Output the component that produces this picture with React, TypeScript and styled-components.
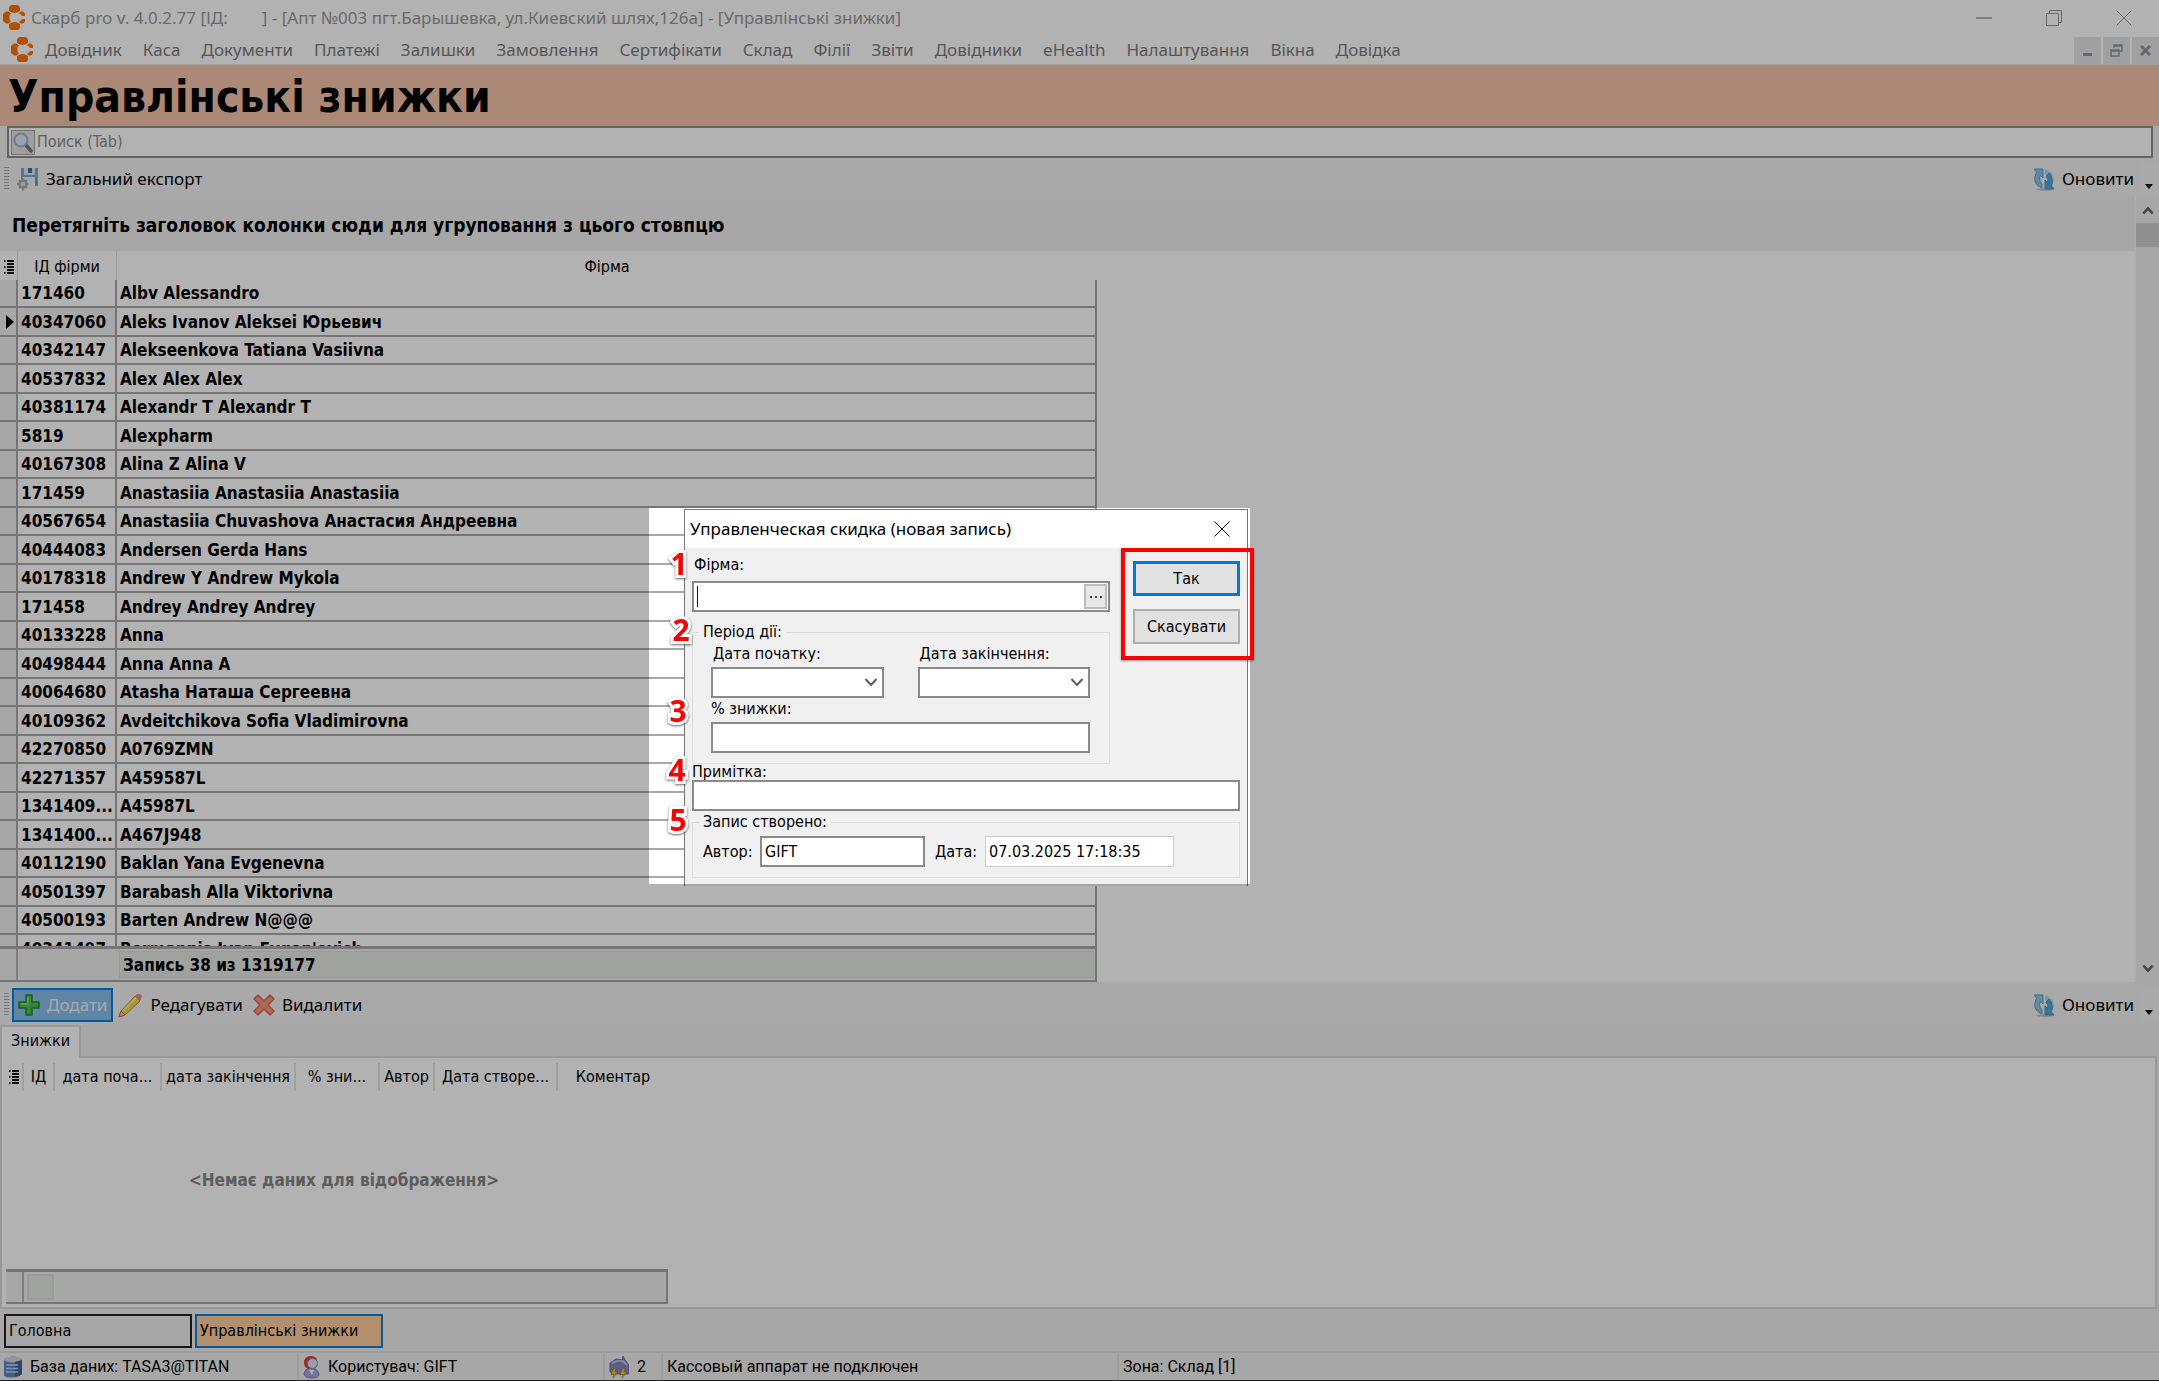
import React from "react";
import styled, { createGlobalStyle, css } from "styled-components";

const TAHOMA = `"DejaVu Sans Condensed", "DejaVu Sans", sans-serif`;
const SEGOE = `"Noto Sans", "Open Sans", sans-serif`;
const SYSTEM = `Roboto, "Liberation Sans", sans-serif`;

const GlobalStyle = createGlobalStyle`
  * { box-sizing: border-box; }
  body { margin: 0; background: #f0f0f0; }
  button, input, select { font: inherit; color: inherit; margin: 0; border-radius: 0; }
`;

const Window = styled.div`
  position: relative;
  display: flex;
  flex-direction: column;
  height: 100vh;
  overflow: hidden;
  background: #f0f0f0;
  color: #000;
  font: 16px/20px ${TAHOMA};
  border-bottom: 1px solid #222;
`;

/* ---------- window chrome ---------- */

const TitleBar = styled.header`
  display: flex;
  align-items: center;
  height: 36px;
  padding-left: 3px;
  background: #fff;
  color: #999;
  font: 17px/24px ${SEGOE};
`;

const TitleText = styled.div`
  flex: 1;
  padding-left: 6px;
  white-space: pre;
`;

const Redacted = styled.span`
  display: inline-block;
  width: 34px;
`;

const CaptionButton = styled.button`
  display: grid;
  place-items: center;
  width: 70px;
  height: 34px;
  padding: 0;
  border: 0;
  background: none;
  color: #999;
`;

const MenuBar = styled.nav`
  display: flex;
  align-items: center;
  height: 29px;
  padding-left: 11px;
  background: #fff;
  color: #7c7c7c;
  font: 17px/24px ${SEGOE};
  border-bottom: 1px solid #e4e4e4;
`;

const MenuList = styled.div`
  display: flex;
  flex: 1;
  gap: 21px;
  padding-left: 12px;
`;

const MenuItem = styled.button`
  padding: 0;
  border: 0;
  background: none;
  white-space: nowrap;
`;

const MdiButton = styled.button`
  display: grid;
  place-items: center;
  width: 27px;
  height: 27px;
  margin-left: 2px;
  padding: 0;
  border: 0;
  background: #e6e6e6;
`;

const Banner = styled.h1`
  height: 61px;
  margin: 0;
  padding-left: 8px;
  background: #f7c5a9;
  font: bold 44px/64px ${TAHOMA};
`;

const SearchBox = styled.label`
  display: flex;
  align-items: center;
  height: 32px;
  margin: 0 6px 0 7px;
  padding: 0 2px;
  border: 2px solid #8e8e8e;
  background: #fff;
`;

const SearchIconBox = styled.span`
  display: grid;
  place-items: center;
  width: 24px;
  height: 25px;
  border: 1px solid #a8a8a8;
  background: #e3e3e3;
`;

const SearchInput = styled.input`
  flex: 1;
  padding: 0 2px;
  border: 0;
  outline: 0;
  background: none;
  font: 16px/20px ${TAHOMA};
  &::placeholder { color: #8a8a8a; opacity: 1; }
`;

/* ---------- toolbars ---------- */

const Toolbar = styled.div<{ $h: number }>`
  display: flex;
  flex: none;
  align-items: center;
  height: ${(p) => p.$h}px;
  padding: 3px 0 0 4px;
  background: #f2f2f2;
  font: 17px/24px ${SEGOE};
`;

const Grip = styled.span`
  width: 5px;
  height: 24px;
  margin-right: 3px;
  background: repeating-linear-gradient(#a8a8a8 0 1px, transparent 1px 3px);
`;

const ToolButton = styled.button<{ $active?: boolean }>`
  display: flex;
  align-items: center;
  gap: 7px;
  height: 34px;
  padding: 0 4px;
  border: 1px solid transparent;
  background: none;
  white-space: nowrap;
  ${(p) =>
    p.$active &&
    css`
      border: 2px solid #0a80dc;
      background: #8abfec;
      color: #eef4fa;
    `}
`;

const Spacer = styled.span`
  flex: 1;
`;

const DropArrow = styled.button`
  display: flex;
  align-items: flex-end;
  justify-content: center;
  width: 20px;
  height: 32px;
  padding: 0 0 6px;
  border: 0;
  background: #f4f4f4;
`;

/* ---------- main grid ---------- */

const Upper = styled.section`
  display: flex;
  flex: 1;
  min-height: 0;
`;

const GridArea = styled.div`
  display: flex;
  flex: 1;
  flex-direction: column;
  min-width: 0;
  background: #fff;
`;

const GroupPanel = styled.div`
  flex: none;
  height: 54px;
  padding-left: 12px;
  background: #f0f0f0;
  font: bold 19px/56px ${TAHOMA};
`;

const TableClip = styled.div`
  flex: 1;
  min-height: 0;
  overflow: hidden;
`;

const FirmTable = styled.table`
  width: 1097px;
  table-layout: fixed;
  border-spacing: 0;
  th {
    height: 29px;
    padding: 2px 0 0;
    border-right: 1px solid #e2e2e2;
    font-weight: normal;
    line-height: 20px;
  }
  th:last-child { border-right: 0; }
  td {
    height: 28px;
    padding: 0 3px;
    border-right: 2px solid #a8a8a8;
    border-bottom: 2px solid #a8a8a8;
    font-weight: bold;
    font-size: 17px;
    line-height: 20px;
    white-space: nowrap;
    overflow: hidden;
  }
  tbody tr:nth-child(even) td { height: 29px; }
  th svg { display: block; margin: 0 auto; }
`;

const MarkCell = styled.td`
  background: #f0f0f0;
  svg { display: block; margin-left: 3px; }
`;

const IdCell = styled.td<{ $focused?: boolean }>`
  background: ${(p) => (p.$focused ? "#f0f0f0" : "#fff")};
`;

const Summary = styled.div`
  display: flex;
  flex: none;
  width: 1097px;
  height: 36px;
  border: solid #a8a8a8;
  border-width: 3px 2px 2px 0;
  background: #f0f0f0;
`;

const SummaryMark = styled.span`
  width: 18px;
  border-right: 2px solid #b4b4b4;
`;

const SummaryText = styled.output`
  flex: 1;
  margin: 2px 1px 2px 101px;
  padding-left: 3px;
  border: 1px solid #dadeda;
  background: #e5e9e6;
  font: bold 17px/26px ${TAHOMA};
`;

const ScrollTrack = styled.div`
  display: flex;
  flex-direction: column;
  align-items: center;
  width: 24px;
  padding: 9px 0;
  border-left: 1px solid #fafafa;
  background: #f0f0f0;
`;

const ScrollThumb = styled.div`
  width: 23px;
  height: 24px;
  margin: 8px 0 auto;
  background: #cdcdcd;
`;

/* ---------- lower panel ---------- */

const TabRow = styled.div`
  display: flex;
  flex: none;
  height: 31px;
`;

const Tab = styled.button`
  position: relative;
  width: 81px;
  height: 33px;
  padding: 0 0 4px;
  border: solid #dcdcdc;
  border-width: 2px 2px 0;
  background: #fff;
`;

const Detail = styled.section`
  display: flex;
  flex: none;
  flex-direction: column;
  height: 253px;
  margin: 0 2px 0 0;
  padding: 5px 4px 3px;
  border: 2px solid #dcdcdc;
  background: #fff;
`;

const DetailTable = styled.table`
  width: 662px;
  table-layout: fixed;
  border-spacing: 0;
  th {
    height: 28px;
    padding: 0;
    border-right: 2px solid #e6e6e6;
    font-weight: normal;
    line-height: 20px;
    white-space: nowrap;
  }
  th:last-child { border-right: 0; }
  th svg { display: block; margin: 0 auto; }
  td {
    height: 178px;
    padding: 0 0 0 14px;
    color: #868686;
    font: bold 17px/20px ${TAHOMA};
    text-align: center;
  }
`;

const DetailSummary = styled.div`
  display: flex;
  width: 662px;
  height: 37px;
  border: solid #a8a8a8;
  border-width: 3px 2px 2px 0;
  background: #f0f0f0;
`;

const DetailMark = styled.span`
  width: 18px;
  border-right: 2px solid #b4b4b4;
`;

const DetailBox = styled.span`
  width: 27px;
  margin: 2px 3px;
  border: 2px solid #dadeda;
  background: #e5e9e6;
`;

const WindowTabs = styled.div`
  display: flex;
  flex: none;
  gap: 3px;
  height: 42px;
  padding: 5px 0 3px 4px;
`;

const WindowTab = styled.button<{ $active?: boolean }>`
  width: 188px;
  padding: 0 3px;
  border: 2px solid ${(p) => (p.$active ? "#0a80dc" : "#222")};
  background: ${(p) => (p.$active ? "#ffcf9e" : "#f0f0f0")};
  text-align: left;
`;

const StatusBar = styled.footer`
  display: flex;
  flex: none;
  height: 29px;
  border-top: 2px solid #e0e0e0;
  font: 16px/28px ${SYSTEM};
`;

const StatusCell = styled.div<{ $w?: number }>`
  display: flex;
  align-items: center;
  gap: 8px;
  width: ${(p) => (p.$w ? `${p.$w}px` : "auto")};
  padding-left: 4px;
  border-right: ${(p) => (p.$w ? "2px solid #dedede" : "0")};
  white-space: nowrap;
`;

/* ---------- dialog ---------- */

const Dialog = styled.form`
  position: absolute;
  left: 684px;
  top: 509px;
  display: flex;
  flex-direction: column;
  width: 564px;
  padding-bottom: 8px;
  border: 1px solid #777;
  border-bottom: 0;
  background: #f0f0f0;
`;

const DialogTitle = styled.div`
  display: flex;
  align-items: center;
  justify-content: space-between;
  height: 38px;
  padding: 0 17px 0 5px;
  background: #fff;
  font: 17px/24px ${SEGOE};
`;

const CloseButton = styled.button`
  display: grid;
  padding: 0;
  border: 0;
  background: none;
`;

const DialogTop = styled.div`
  display: flex;
  justify-content: space-between;
  padding: 9px 7px 0;
`;

const FormColumn = styled.div`
  width: 418px;
`;

const ButtonColumn = styled.div`
  display: flex;
  flex-direction: column;
  gap: 13px;
  width: 107px;
  padding-top: 4px;
`;

const PushButton = styled.button<{ $primary?: boolean }>`
  height: 35px;
  padding: 0;
  border: ${(p) => (p.$primary ? "3px solid #0078d7" : "2px solid #adadad")};
  background: #e1e1e1;
`;

const Label = styled.label<{ $w?: number; $pad?: number }>`
  display: block;
  width: ${(p) => (p.$w ? `${p.$w}px` : "auto")};
  padding-left: ${(p) => p.$pad ?? 0}px;
  line-height: 16px;
  white-space: nowrap;
`;

const Field = styled.input<{ $w?: number; $light?: boolean }>`
  display: block;
  width: ${(p) => (p.$w ? `${p.$w}px` : "100%")};
  height: 31px;
  padding: 0 3px;
  border: ${(p) => (p.$light ? "1px solid #ccc" : "2px solid #8a8a8a")};
  outline: 0;
  background: #fff;
`;

const LookupField = styled.div`
  display: flex;
  align-items: center;
  height: 31px;
  margin: 8px 0 12px;
  padding: 0 1px;
  border: 2px solid #8a8a8a;
  background: #fff;
`;

const Caret = styled.span`
  width: 1px;
  height: 21px;
  margin-left: 2px;
  background: #111;
`;

const LookupInput = styled.input`
  flex: 1;
  border: 0;
  outline: 0;
  background: none;
`;

const LookupButton = styled.button`
  display: grid;
  place-items: center;
  width: 23px;
  height: 25px;
  padding: 0;
  border: 2px solid #bcbcbc;
  background: #e8e8e8;
`;

const Group = styled.fieldset<{ $row?: boolean }>`
  min-width: 0;
  margin: 0;
  padding: ${(p) => (p.$row ? "6px 10px 10px" : "6px 19px 10px 18px")};
  border: 1px solid #dcdcdc;
`;

const Legend = styled.legend<{ $shift?: number }>`
  margin-left: ${(p) => p.$shift ?? 0}px;
  padding: 0 4px;
  line-height: 16px;
`;

const DateRow = styled.div`
  display: grid;
  grid-template-columns: 1fr 1fr;
  gap: 34px;
  margin-bottom: 3px;
`;

const Stack = styled.div`
  display: flex;
  flex-direction: column;
  gap: 5px;
`;

const SelectWrap = styled.div`
  position: relative;
  svg {
    position: absolute;
    right: 6px;
    top: 11px;
    pointer-events: none;
  }
`;

const Select = styled.select`
  display: block;
  width: 100%;
  height: 31px;
  border: 2px solid #8a8a8a;
  background: #fff;
  appearance: none;
`;

const DialogBottom = styled.div`
  padding: 0 7px;
`;

const NoteField = styled(Field)`
  margin-bottom: 3px;
`;

const InlineRow = styled.div`
  display: flex;
  align-items: center;
`;

const Gap = styled.span`
  width: 10px;
`;

/* ---------- tutorial layer ---------- */

const Spotlight = styled.div`
  position: absolute;
  left: 649px;
  top: 508px;
  width: 601px;
  height: 376px;
  box-shadow: 0 0 0 3000px rgba(0, 0, 0, 0.3);
  pointer-events: none;
`;

const Highlight = styled.div`
  position: absolute;
  left: 1121px;
  top: 548px;
  width: 133px;
  height: 112px;
  border: 4px solid #fe0000;
  box-shadow: 0 1px 2px rgba(0, 0, 0, 0.4);
  pointer-events: none;
`;

const Step = styled.span`
  position: absolute;
  width: 24px;
  color: #fe0000;
  font: bold 30px/32px "Open Sans", sans-serif;
  text-align: center;
  -webkit-text-stroke: 6px #fff;
  paint-order: stroke fill;
  filter: drop-shadow(0 1px 1px rgba(0, 0, 0, 0.6));
  pointer-events: none;
`;

/* ---------- icons ---------- */

const Logo = () => (
  <svg width="22" height="26" viewBox="0 0 22 26" fill="#ff7300">
    <path d="M6 6V2.500Q6.500 0 9 0h5q2.500 0 3 2.500V6q-3 2-5.500 2T6 6z" />
    <path d="M6 19v3.500Q6.500 25 9 25h5q2.500 0 3-2.500V19q-3-2-5.500-2T6 19z" />
    <path d="M5.500 6.500 8 8.500 6.500 10v5l1.500 1.500-2.500 2H3L0 16V9l3-2.500z" />
    <path d="M17.500 6.500H20l2 2v2.500h-2.500L16 8z" />
    <path d="M17.500 18.500H20l2-2V14h-2.500L16 17z" />
  </svg>
);

const Cross = ({ size, width }: { size: number; width: number }) => (
  <svg width={size} height={size} viewBox="0 0 16 16" fill="none" stroke="currentColor" strokeWidth={width}>
    <path d="M.5.5l15 15M15.500.5l-15 15" />
  </svg>
);

const Magnifier = () => (
  <svg width="20" height="21" viewBox="0 0 20 21">
    <path d="M12 12l6 7" stroke="#777" strokeWidth="3.500" strokeLinecap="round" />
    <circle cx="8" cy="8" r="6.500" fill="#dfe9fb" stroke="#a3afc8" strokeWidth="2" />
  </svg>
);

const ExportIcon = () => (
  <svg width="22" height="24" viewBox="0 0 22 24">
    <path d="M4 1h17v18H4z" fill="#86a9c2" />
    <path d="M7 1h11v7H7z" fill="#dfeaf2" />
    <path d="M11 1h4v5h-4z" fill="#4c6f96" />
    <path d="M6 10h12v9H6z" fill="#eceeef" />
    <path d="M18 10h2v8h-2z" fill="#5c9fc0" />
    <circle cx="6" cy="17" r="3.500" fill="#e4e4e4" stroke="#a5acb1" strokeWidth="2.500" />
    <path d="M6 11.500v2M6 20.500v3M0 17h2.500M9.500 17h2M2 13l1.500 1.500M8.500 19.500L10 21M10 13l-1.500 1.500M3.500 19.500L2 21" stroke="#a5acb1" strokeWidth="2" />
  </svg>
);

const RefreshIcon = () => (
  <svg width="22" height="23" viewBox="0 0 22 23">
    <ellipse cx="12" cy="21.500" rx="9" ry="1.500" fill="#c6c6c6" />
    <path d="M12 1q8 2 9 10l-1 4-4-1q1-6-4-8z" fill="#b4d8f0" />
    <path d="M1 1h9v9L7.500 7.500Q5 11 9 16v4Q-2 16 3.500 4z" fill="#8cc6ea" stroke="#5a9fce" />
    <path d="M21 21h-9v-9l2.500 2.500Q16 12 13 8l3-3q5 6 2.500 13z" fill="#58a8d8" stroke="#4a94c8" />
  </svg>
);

const PlusIcon = () => (
  <svg width="22" height="22" viewBox="0 0 22 22">
    <path d="M8 1h6v7h7v6h-7v7H8v-7H1V8h7z" fill="#4cc04c" stroke="#1f8a2a" strokeWidth="1.500" strokeLinejoin="round" />
    <path d="M10 3v7H3" fill="none" stroke="#8be08b" strokeWidth="1.500" />
  </svg>
);

const PencilIcon = () => (
  <svg width="25" height="25" viewBox="0 0 25 25">
    <path d="M17 3l5 5L7 22l-6 2 2-6z" fill="#f6d04c" stroke="#b8923a" />
    <path d="M1 24l2-6 4 4z" fill="#efcfa8" stroke="#a07c50" />
    <path d="M18 2q3-3 6 1 0 2-2 5l-5-5z" fill="#e88a90" />
    <path d="M5 18L18 5" stroke="#fdeb9c" strokeWidth="2" />
  </svg>
);

const DeleteIcon = () => (
  <svg width="22" height="22" viewBox="0 0 22 22">
    <path
      d="M5 1l6 6 6-6 4 4-6 6 6 6-4 4-6-6-6 6-4-4 6-6-6-6z"
      fill="#f79580"
      stroke="#dd6656"
      strokeWidth="1.500"
      strokeLinejoin="round"
    />
  </svg>
);

const IndicatorIcon = () => (
  <svg width="10" height="16" viewBox="0 0 10 16" stroke="#111" strokeWidth="2">
    <path d="M3 2h7M3 5h7M3 8h7M3 11h7M3 14h7M0 2h1.500M0 8h1.500M0 14h1.500" />
  </svg>
);

const DatabaseIcon = () => (
  <svg width="18" height="22" viewBox="0 0 18 22">
    <path d="M0 3q9-5 18 0v15q-9 6-18 2z" fill="#5b83c4" />
    <ellipse cx="9" cy="3.500" rx="9" ry="3" fill="#cfd6e6" />
    <path d="M11 6l7-2v14q-3 3-7 3z" fill="#4a5f94" />
    <path d="M2 9h12M2 12.500h12M2 16h12" stroke="#b5d4f7" strokeWidth="1.500" />
  </svg>
);

const UserIcon = () => (
  <svg width="17" height="24" viewBox="0 0 17 24">
    <path d="M1 19q1-6 7-6t8 6q0 4-7 4t-8-4z" fill="#a5a9da" stroke="#7478b4" />
    <path d="M1 8q0-7 7-7 4 0 6 3L6 14q-5-1-5-6z" fill="#d8412f" />
    <circle cx="9.500" cy="8.500" r="5" fill="#dfe0f4" stroke="#8286bc" />
    <path d="M6 15l3 5 2-5z" fill="#fff" />
  </svg>
);

const MailIcon = () => (
  <svg width="20" height="24" viewBox="0 0 20 24">
    <path d="M1 8l6-4 6 1 1-4 2 4 4 5v9H5l-4-2z" fill="#8589c4" stroke="#6b6fa6" />
    <path d="M3 8l5-2h6l4 4" stroke="#b9bce4" strokeWidth="2" fill="none" />
    <path d="M4 14l-2 6 3-1-1 4 5-7-3 1 1-4zM13 14l-2 6 3-1-1 4 5-7-3 1 1-4z" fill="#f3cb3e" stroke="#8a7024" strokeWidth=".7" />
  </svg>
);

const Chevron = ({ up, w, h, sw }: { up?: boolean; w: number; h: number; sw: number }) => (
  <svg width={w} height={h} viewBox="0 0 14 9" fill="none" stroke="#606060" strokeWidth={sw}>
    <path d={up ? "M1.500 8L7 2l5.500 6" : "M1.500 1L7 7l5.500-6"} />
  </svg>
);

/* ---------- data ---------- */

const MENU = [
  "Довідник", "Каса", "Документи", "Платежі", "Залишки", "Замовлення", "Сертифікати", "Склад",
  "Філії", "Звіти", "Довідники", "eHealth", "Налаштування", "Вікна", "Довідка",
];

const FIRMS: [string, string][] = [
  ["171460", "Albv Alessandro"],
  ["40347060", "Aleks Ivanov Aleksei Юрьевич"],
  ["40342147", "Alekseenkova Tatiana Vasiivna"],
  ["40537832", "Alex Alex Alex"],
  ["40381174", "Alexandr T Alexandr T"],
  ["5819", "Alexpharm"],
  ["40167308", "Alina Z Alina V"],
  ["171459", "Anastasiia Anastasiia Anastasiia"],
  ["40567654", "Anastasiia Chuvashova Анастасия Андреевна"],
  ["40444083", "Andersen Gerda Hans"],
  ["40178318", "Andrew Y Andrew Mykola"],
  ["171458", "Andrey Andrey Andrey"],
  ["40133228", "Anna"],
  ["40498444", "Anna Anna A"],
  ["40064680", "Atasha Наташа Сергеевна"],
  ["40109362", "Avdeitchikova Sofia Vladimirovna"],
  ["42270850", "A0769ZMN"],
  ["42271357", "A459587L"],
  ["1341409...", "A45987L"],
  ["1341400...", "A467J948"],
  ["40112190", "Baklan Yana Evgenevna"],
  ["40501397", "Barabash Alla Viktorivna"],
  ["40500193", "Barten Andrew N@@@"],
  ["40341497", "Bermannis Ivan Evgen'evich"],
];

const DETAIL_COLUMNS: [string, number][] = [
  ["ІД", 31],
  ["дата поча...", 107],
  ["дата закінчення", 134],
  ["% зни...", 84],
  ["Автор", 55],
  ["Дата створе...", 123],
  ["Коментар", 110],
];

const STEPS: [number, number, number][] = [
  [1, 667, 548],
  [2, 669, 614],
  [3, 666, 695],
  [4, 665, 754],
  [5, 666, 804],
];

const Refresh = () => (
  <>
    <Spacer />
    <ToolButton type="button">
      <RefreshIcon />
      Оновити
    </ToolButton>
    <DropArrow type="button" aria-label="Параметри панелі">
      <svg width="8" height="5" viewBox="0 0 8 5"><path d="M0 0h8L4 5z" /></svg>
    </DropArrow>
  </>
);

export default function App() {
  return (
    <Window>
      <GlobalStyle />
      <TitleBar>
        <Logo />
        <TitleText>
          Скарб pro v. 4.0.2.77 [ІД:<Redacted />] - [Апт №003 пгт.Барышевка, ул.Киевский шлях,126а] - [Управлінські знижки]
        </TitleText>
        <CaptionButton aria-label="Згорнути">
          <svg width="16" height="2"><path d="M0 1h16" stroke="currentColor" strokeWidth="1.500" /></svg>
        </CaptionButton>
        <CaptionButton aria-label="Відновити">
          <svg width="16" height="16" fill="none" stroke="currentColor"><path d="M.5 3.500h12v12H.5zM3.500 3V.5h12v12H13" /></svg>
        </CaptionButton>
        <CaptionButton aria-label="Закрити"><Cross size={16} width={1} /></CaptionButton>
      </TitleBar>
      <MenuBar>
        <Logo />
        <MenuList>
          {MENU.map((m) => <MenuItem key={m}>{m}</MenuItem>)}
        </MenuList>
        <MdiButton aria-label="Згорнути вікно">
          <svg width="9" height="11"><path d="M0 9.500h9" stroke="#8b98a5" strokeWidth="3" /></svg>
        </MdiButton>
        <MdiButton aria-label="Відновити вікно">
          <svg width="13" height="13" fill="none" stroke="#8b98a5" strokeWidth="1.500"><path d="M1 6h8v6H1zM1 7h8M4 4V1h8v6h-2M4 2h8" /></svg>
        </MdiButton>
        <MdiButton aria-label="Закрити вікно">
          <svg width="11" height="11" stroke="#8b98a5" strokeWidth="3"><path d="M1 1l9 9M10 1l-9 9" /></svg>
        </MdiButton>
      </MenuBar>
      <Banner>Управлінські знижки</Banner>
      <SearchBox>
        <SearchIconBox><Magnifier /></SearchIconBox>
        <SearchInput aria-label="Поиск" placeholder="Поиск (Tab)" />
      </SearchBox>
      <Toolbar $h={39}>
        <Grip />
        <ToolButton type="button"><ExportIcon />Загальний експорт</ToolButton>
        <Refresh />
      </Toolbar>

      <Upper>
        <GridArea>
          <GroupPanel>Перетягніть заголовок колонки сюди для угруповання з цього стовпцю</GroupPanel>
          <TableClip>
            <FirmTable>
              <colgroup>
                <col style={{ width: 18 }} />
                <col style={{ width: 99 }} />
                <col />
              </colgroup>
              <thead>
                <tr>
                  <th><IndicatorIcon /></th>
                  <th>ІД фірми</th>
                  <th>Фірма</th>
                </tr>
              </thead>
              <tbody>
                {FIRMS.map(([id, name], i) => (
                  <tr key={id}>
                    <MarkCell>
                      {i === 1 && (
                        <svg width="8" height="14" viewBox="0 0 8 14"><path d="M0 0l8 7-8 7z" /></svg>
                      )}
                    </MarkCell>
                    <IdCell $focused={i === 1}>{id}</IdCell>
                    <td>{name}</td>
                  </tr>
                ))}
              </tbody>
            </FirmTable>
          </TableClip>
          <Summary>
            <SummaryMark />
            <SummaryText>Запись 38 из 1319177</SummaryText>
          </Summary>
        </GridArea>
        <ScrollTrack>
          <Chevron up w={12} h={9} sw={3} />
          <ScrollThumb />
          <Chevron w={12} h={9} sw={3} />
        </ScrollTrack>
      </Upper>

      <Toolbar $h={43}>
        <Grip />
        <ToolButton type="button" $active><PlusIcon />Додати</ToolButton>
        <ToolButton type="button"><PencilIcon />Редагувати</ToolButton>
        <ToolButton type="button"><DeleteIcon />Видалити</ToolButton>
        <Refresh />
      </Toolbar>
      <TabRow><Tab type="button">Знижки</Tab></TabRow>
      <Detail>
        <DetailTable>
          <colgroup>
            <col style={{ width: 18 }} />
            {DETAIL_COLUMNS.map(([name, w]) => <col key={name} style={{ width: w }} />)}
          </colgroup>
          <thead>
            <tr>
              <th><IndicatorIcon /></th>
              {DETAIL_COLUMNS.map(([name]) => <th key={name}>{name}</th>)}
            </tr>
          </thead>
          <tbody>
            <tr><td colSpan={8}>&lt;Немає даних для відображення&gt;</td></tr>
          </tbody>
        </DetailTable>
        <DetailSummary><DetailMark /><DetailBox /></DetailSummary>
      </Detail>
      <WindowTabs>
        <WindowTab type="button">Головна</WindowTab>
        <WindowTab type="button" $active>Управлінські знижки</WindowTab>
      </WindowTabs>
      <StatusBar>
        <StatusCell $w={299}><DatabaseIcon />База даних: TASA3@TITAN</StatusCell>
        <StatusCell $w={306}><UserIcon />Користувач: GIFT</StatusCell>
        <StatusCell $w={58}><MailIcon />2</StatusCell>
        <StatusCell $w={456}>Кассовый аппарат не подключен</StatusCell>
        <StatusCell>Зона: Склад [1]</StatusCell>
      </StatusBar>

      <Dialog role="dialog" aria-labelledby="dlg-title">
        <DialogTitle>
          <span id="dlg-title">Управленческая скидка (новая запись)</span>
          <CloseButton type="button" aria-label="Закрити"><Cross size={16} width={1} /></CloseButton>
        </DialogTitle>
        <DialogTop>
          <FormColumn>
            <Label htmlFor="firm" $pad={2}>Фірма:</Label>
            <LookupField>
              <Caret />
              <LookupInput id="firm" />
              <LookupButton type="button" aria-label="Вибрати фірму">
                <svg width="12" height="2" fill="#444"><path d="M0 0h2v2H0zM5 0h2v2H5zM10 0h2v2h-2z" /></svg>
              </LookupButton>
            </LookupField>
            <Group>
              <Legend $shift={-12}>Період дії:</Legend>
              <DateRow>
                <Stack>
                  <Label htmlFor="from" $pad={2}>Дата початку:</Label>
                  <SelectWrap>
                    <Select id="from" />
                    <Chevron w={14} h={9} sw={2} />
                  </SelectWrap>
                </Stack>
                <Stack>
                  <Label htmlFor="to" $pad={2}>Дата закінчення:</Label>
                  <SelectWrap>
                    <Select id="to" />
                    <Chevron w={14} h={9} sw={2} />
                  </SelectWrap>
                </Stack>
              </DateRow>
              <Stack>
                <Label htmlFor="percent">% знижки:</Label>
                <Field id="percent" />
              </Stack>
            </Group>
          </FormColumn>
          <ButtonColumn>
            <PushButton type="button" $primary>Так</PushButton>
            <PushButton type="button">Скасувати</PushButton>
          </ButtonColumn>
        </DialogTop>
        <DialogBottom>
          <Label htmlFor="note">Примітка:</Label>
          <NoteField id="note" />
          <Group $row>
            <Legend $shift={-4}>Запис створено:</Legend>
            <InlineRow>
              <Label htmlFor="author" $w={57}>Автор:</Label>
              <Field id="author" $w={165} defaultValue="GIFT" />
              <Gap />
              <Label htmlFor="created" $w={50}>Дата:</Label>
              <Field id="created" $w={189} $light defaultValue="07.03.2025 17:18:35" />
            </InlineRow>
          </Group>
        </DialogBottom>
      </Dialog>

      <Spotlight />
      <Highlight />
      {STEPS.map(([n, x, y]) => (
        <Step key={n} style={{ left: x, top: y }}>{n}</Step>
      ))}
    </Window>
  );
}
